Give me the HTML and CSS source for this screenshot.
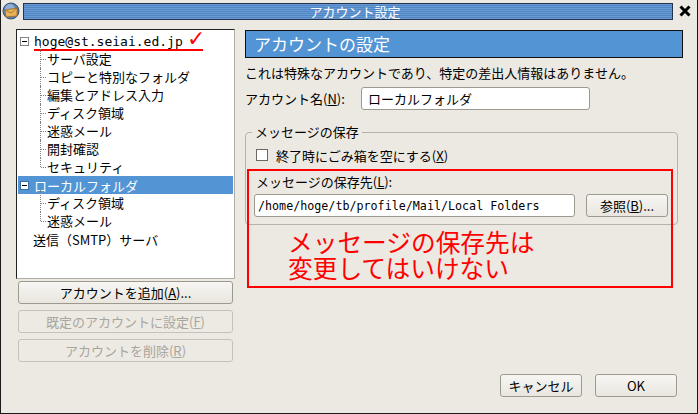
FILE: index.html
```html
<!DOCTYPE html>
<html lang="ja">
<head>
  <meta charset="UTF-8" />
  <title>アカウント設定</title>
  <link rel="stylesheet" href="styles.css">
</head>
<body>
  <div class="window">
    <div class="titlebar">
      <svg class="app-icon" width="18" height="18" viewBox="0 0 18 18">
        <circle cx="9" cy="9" r="8" fill="#5d7fa8" stroke="#3a5272" stroke-width="1"/>
        <circle cx="8" cy="7" r="5" fill="#8fb1d6"/>
        <path d="M3 8 L15 6 L15 14 L4 15 Z" fill="#e9b25a" stroke="#9a6a22" stroke-width="0.8"/>
        <path d="M3 8 L9 11 L15 6" fill="none" stroke="#9a6a22" stroke-width="0.8"/>
      </svg>
      <div class="title-bar-fill">アカウント設定</div>
      <svg class="close-btn" width="12" height="12" viewBox="0 0 12 12">
        <path d="M1.5 1.5 L10.5 10.5 M10.5 1.5 L1.5 10.5" stroke="#000" stroke-width="3"/>
      </svg>
    </div>

    <div class="content">
      <div class="left-col">
        <div class="tree">
          <div class="tree-row account">
            <span class="expander"></span>
            <span class="mono">hoge@st.seiai.ed.jp</span>
            <span class="check">✓</span>
          </div>
          <ul class="children">
            <li>サーバ設定</li>
            <li>コピーと特別なフォルダ</li>
            <li>編集とアドレス入力</li>
            <li>ディスク領域</li>
            <li>迷惑メール</li>
            <li>開封確認</li>
            <li>セキュリティ</li>
          </ul>
          <div class="tree-row selected">
            <span class="expander"></span>
            <span>ローカルフォルダ</span>
          </div>
          <ul class="children">
            <li>ディスク領域</li>
            <li>迷惑メール</li>
          </ul>
          <div class="tree-row smtp">送信（SMTP）サーバ</div>
        </div>

        <button class="btn wide">アカウントを追加(<u>A</u>)...</button>
        <button class="btn wide" disabled>既定のアカウントに設定(<u>F</u>)</button>
        <button class="btn wide" disabled>アカウントを削除(<u>R</u>)</button>
      </div>

      <div class="right-col">
        <div class="panel-header">アカウントの設定</div>
        <div class="desc">これは特殊なアカウントであり、特定の差出人情報はありません。</div>
        <div class="name-row">
          <span class="label">アカウント名(<u>N</u>):</span>
          <input class="field name-field" type="text" value="ローカルフォルダ" />
        </div>

        <fieldset class="group">
          <legend>メッセージの保存</legend>
          <div class="check-row">
            <span class="checkbox"></span>
            <span>終了時にごみ箱を空にする(<u>X</u>)</span>
          </div>
          <div class="store-label">メッセージの保存先(<u>L</u>):</div>
          <div class="path-row">
            <input class="field path-field" type="text" value="/home/hoge/tb/profile/Mail/Local Folders" />
            <button class="btn browse">参照(<u>B</u>)...</button>
          </div>
        </fieldset>

        <div class="note">
          <div>メッセージの保存先は</div>
          <div>変更してはいけない</div>
        </div>

        <div class="dialog-buttons">
          <button class="btn action">キャンセル</button>
          <button class="btn action">OK</button>
        </div>
      </div>
    </div>
  </div>
</body>
</html>
```

FILE: styles.css
```css
body {
  margin: 0;
  background-color: #ece9e3;
  font-family: "Noto Sans CJK JP", "DejaVu Sans", sans-serif;
  font-size: 13px;
  color: #000;
}

.window {
  width: 698px;
  height: 414px;
  box-sizing: border-box;
  border: 1px solid #1a1a1a;
  border-top: none;
  background-color: #ece9e3;
  display: flex;
  flex-direction: column;
}

.titlebar {
  height: 22px;
  display: flex;
  align-items: center;
  padding: 0 4px 0 1px;
}

.app-icon {
  flex: none;
  margin-right: 3px;
}

.title-bar-fill {
  flex: 1;
  height: 15px;
  border: 1px solid #23344f;
  background: repeating-linear-gradient(to bottom, #6a9ad3 0, #6a9ad3 1px, #4f86c4 1px, #4f86c4 2px);
  color: #fff;
  text-align: center;
  font-size: 13px;
  line-height: 15px;
  padding-left: 14px;
}

.close-btn {
  flex: none;
  margin: 0 2px 0 6px;
}

.content {
  flex: 1;
  display: flex;
  padding: 7px 0 0 15px;
}

.left-col {
  width: 219px;
  display: flex;
  flex-direction: column;
}

.tree {
  height: 250px;
  box-sizing: border-box;
  background: #fff;
  border: 1px solid #b0ada6;
  border-top-color: #222;
  border-left-color: #222;
  padding: 2px 1px 0 1px;
  margin-bottom: 2px;
}

.tree-row {
  height: 18px;
  display: flex;
  align-items: center;
  white-space: nowrap;
}

.expander {
  width: 9px;
  height: 9px;
  box-sizing: border-box;
  border: 1px solid #848284;
  background: #fff;
  margin: 0 5px 0 2px;
  position: relative;
}

.expander::after {
  content: "";
  position: absolute;
  left: 1px;
  top: 3px;
  width: 5px;
  height: 1px;
  background: #000;
}

.account {
  position: relative;
}

.mono {
  font-family: "DejaVu Sans Mono", monospace;
  font-size: 13px;
  border-bottom: 2px solid #f00;
  padding-right: 20px;
  line-height: 14px;
  margin-top: 3px;
}

.check {
  position: absolute;
  left: 169px;
  top: -6px;
  color: #f00;
  font-size: 22px;
  font-family: "DejaVu Sans", sans-serif;
}

.children {
  list-style: none;
  margin: 0;
  padding: 0 0 0 29px;
}

.children li {
  position: relative;
  height: 18px;
  line-height: 18px;
  white-space: nowrap;
}

.children li::before {
  content: "";
  position: absolute;
  left: -7px;
  top: 0;
  height: 18px;
  border-left: 1px dotted #7f7f7f;
}

.children li:first-child::before {
  top: -4px;
  height: 22px;
}

.children li:last-child::before {
  height: 9px;
}

.children li:first-child:last-child::before {
  height: 13px;
}

.children li::after {
  content: "";
  position: absolute;
  left: -6px;
  top: 9px;
  width: 5px;
  border-top: 1px dotted #7f7f7f;
}

.selected {
  background: #5294d4;
  color: #fff;
}

.selected .expander {
  border-color: #3b6ea3;
}

.smtp {
  padding-left: 15px;
}

.btn {
  font-family: "Noto Sans CJK JP", "DejaVu Sans", sans-serif;
  font-size: 13px;
  height: 23px;
  background: linear-gradient(to bottom, #f7f6f3, #e9e6df);
  border: 1px solid #9d998f;
  border-radius: 3px;
  color: #000;
  padding: 0;
  line-height: 20px;
}

.btn:disabled {
  color: #a9a59c;
  border-color: #c6c2b9;
  background: #edeae4;
}

.wide {
  width: 215px;
  margin: 0 0 6px 2px;
}

.right-col {
  width: 438px;
  margin-left: 10px;
  display: flex;
  flex-direction: column;
  position: relative;
}

.panel-header {
  height: 28px;
  box-sizing: border-box;
  background: #5294d4;
  border: 1px solid #111;
  color: #fff;
  font-size: 17px;
  line-height: 25px;
  padding-left: 8px;
  margin-top: 1px;
}

.desc {
  margin-top: 7px;
  line-height: 16px;
}

.name-row {
  display: flex;
  align-items: center;
  margin-top: 6px;
}

.name-row .label {
  width: 116px;
}

.field {
  height: 23px;
  box-sizing: border-box;
  border: 1px solid #9d998f;
  border-radius: 3px;
  background: #fff;
  padding: 0 6px;
  font-family: "Noto Sans CJK JP", sans-serif;
  font-size: 13px;
}

.name-field {
  width: 229px;
}

.group {
  margin: 14px 5px 0 0;
  padding: 2px 8px 7px 8px;
  border: 1px solid #b8b3a8;
  border-radius: 4px;
}

.group legend {
  padding: 0 3px;
  margin-left: -2px;
  line-height: 16px;
}

.check-row {
  display: flex;
  align-items: center;
  height: 18px;
  margin-top: 4px;
}

.checkbox {
  width: 12px;
  height: 12px;
  box-sizing: border-box;
  border: 1px solid #6b6860;
  background: #fff;
  margin: 0 8px 0 2px;
}

.store-label {
  margin-top: 10px;
  padding-left: 2px;
  line-height: 16px;
}

.path-row {
  display: flex;
  align-items: center;
  margin-top: 4px;
}

.path-field {
  width: 321px;
  font-family: "DejaVu Sans Mono", monospace;
  font-size: 11.7px;
  padding-left: 3px;
}

.browse {
  width: 82px;
  margin-left: 11px;
}

.note {
  position: absolute;
  left: 2px;
  top: 140px;
  width: 426px;
  height: 119px;
  box-sizing: border-box;
  border: 2px solid #f00;
  padding: 57px 0 0 39px;
  color: #f00;
  font-size: 24.7px;
}

.note div {
  height: 26px;
  line-height: 26px;
}

.dialog-buttons {
  margin-top: auto;
  margin-bottom: 16px;
  display: flex;
  justify-content: flex-end;
  gap: 13px;
  padding-right: 6px;
}

.action {
  width: 82px;
}
```
